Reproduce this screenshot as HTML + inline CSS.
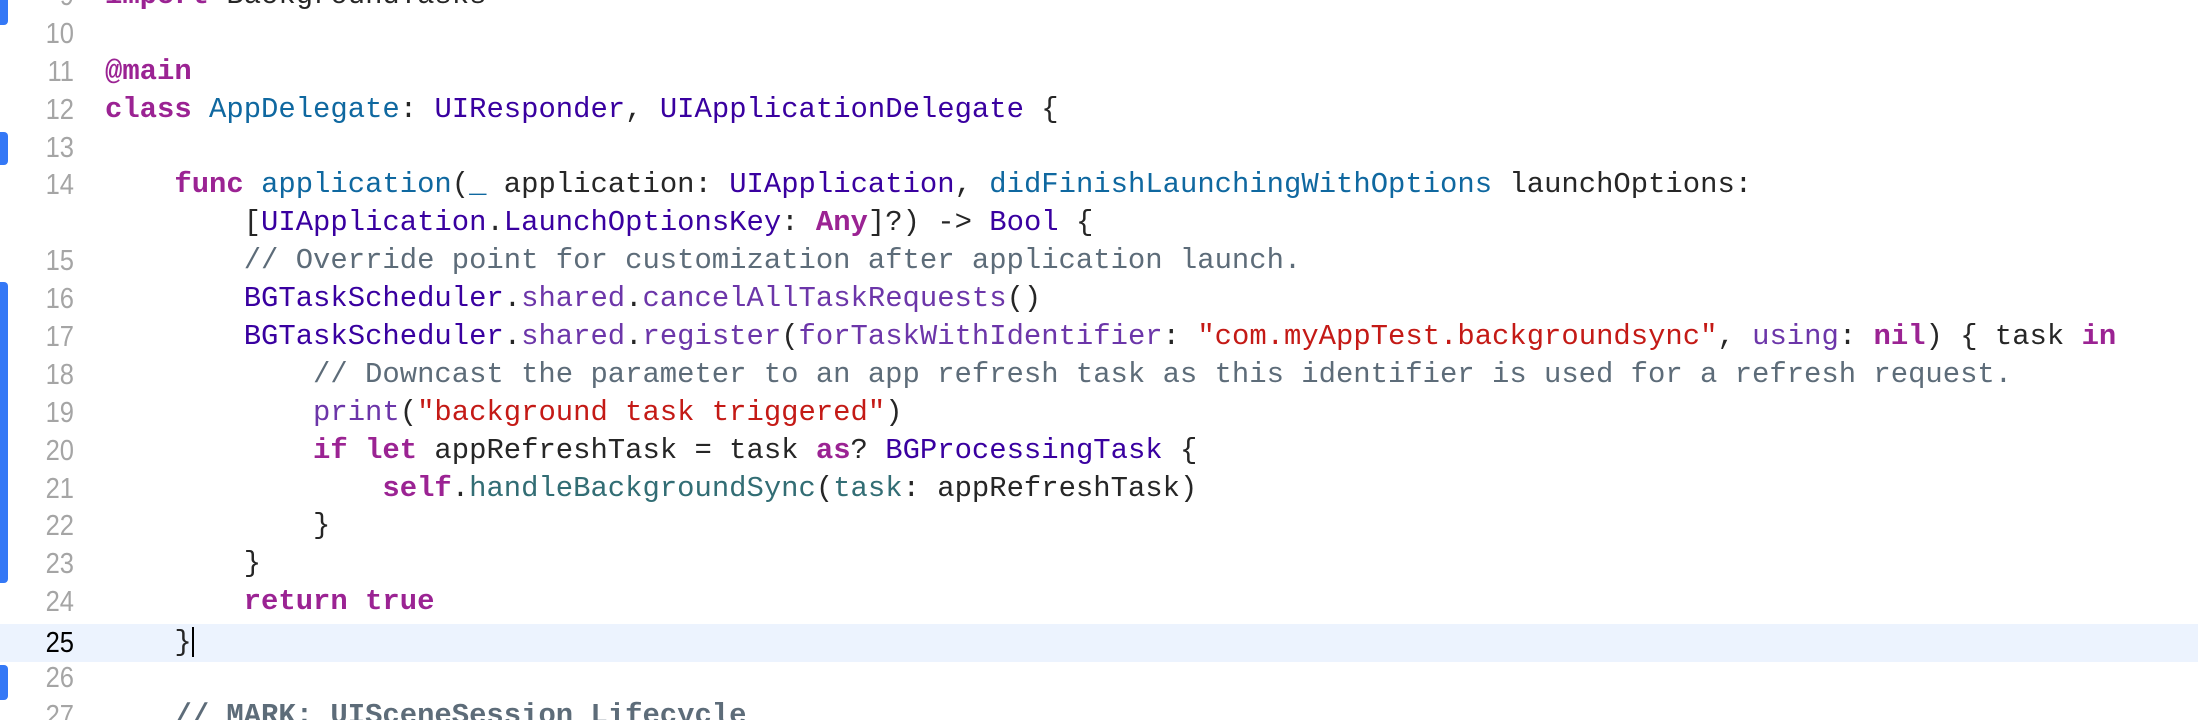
<!DOCTYPE html>
<html><head><meta charset="utf-8"><style>
html,body{margin:0;padding:0;background:#fff;width:2198px;height:720px;overflow:hidden;position:relative}
.l{position:absolute;left:0;height:38px;line-height:38px;font-family:"Liberation Mono",monospace;font-size:28.9px;white-space:pre;color:#262626;width:2198px}
.n{position:absolute;right:2124px;color:#a5a5a5;font-family:"Liberation Sans",sans-serif;font-size:29px;text-align:right;width:70px;transform:scaleX(0.88);transform-origin:right}
.c{position:absolute;left:105px}
.k{color:#9b2393;font-weight:bold}.t{color:#3900a0}.d{color:#0f68a0}.m{color:#6c36a9}.p{color:#326d74}.s{color:#c41a16}.cm{color:#5d6c79}
.bar{position:absolute;left:0;width:8px;background:#3478f6;border-radius:0 4px 4px 0}
</style></head><body>
<div style="position:absolute;left:0;top:624px;width:2198px;height:38px;background:#ecf3fe"></div>
<div class="bar" style="top:-5px;height:30px"></div>
<div class="bar" style="top:132px;height:33px"></div>
<div class="bar" style="top:282px;height:301px"></div>
<div class="bar" style="top:665px;height:35px"></div>

<div class="l" style="top:-23px"><span class="n">9</span><span class="c"><span class="k">import</span> BackgroundTasks</span></div>
<div class="l" style="top:15px"><span class="n">10</span></div>
<div class="l" style="top:53px"><span class="n">11</span><span class="c"><span class="k">@main</span></span></div>
<div class="l" style="top:91px"><span class="n">12</span><span class="c"><span class="k">class</span> <span class="d">AppDelegate</span>: <span class="t">UIResponder</span>, <span class="t">UIApplicationDelegate</span> {</span></div>
<div class="l" style="top:129px"><span class="n">13</span></div>
<div class="l" style="top:166px"><span class="n">14</span><span class="c">    <span class="k">func</span> <span class="d">application</span>(<span class="d">_</span> application: <span class="t">UIApplication</span>, <span class="d">didFinishLaunchingWithOptions</span> launchOptions:</span></div>
<div class="l" style="top:204px"><span class="c">        [<span class="t">UIApplication</span>.<span class="t">LaunchOptionsKey</span>: <span class="k">Any</span>]?) -> <span class="t">Bool</span> {</span></div>
<div class="l" style="top:242px"><span class="n">15</span><span class="c">        <span class="cm">// Override point for customization after application launch.</span></span></div>
<div class="l" style="top:280px"><span class="n">16</span><span class="c">        <span class="t">BGTaskScheduler</span>.<span class="m">shared</span>.<span class="m">cancelAllTaskRequests</span>()</span></div>
<div class="l" style="top:318px"><span class="n">17</span><span class="c">        <span class="t">BGTaskScheduler</span>.<span class="m">shared</span>.<span class="m">register</span>(<span class="m">forTaskWithIdentifier</span>: <span class="s">"com.myAppTest.backgroundsync"</span>, <span class="m">using</span>: <span class="k">nil</span>) { task <span class="k">in</span></span></div>
<div class="l" style="top:356px"><span class="n">18</span><span class="c">            <span class="cm">// Downcast the parameter to an app refresh task as this identifier is used for a refresh request.</span></span></div>
<div class="l" style="top:394px"><span class="n">19</span><span class="c">            <span class="m">print</span>(<span class="s">"background task triggered"</span>)</span></div>
<div class="l" style="top:432px"><span class="n">20</span><span class="c">            <span class="k">if</span> <span class="k">let</span> appRefreshTask = task <span class="k">as</span>? <span class="t">BGProcessingTask</span> {</span></div>
<div class="l" style="top:470px"><span class="n">21</span><span class="c">                <span class="k">self</span>.<span class="p">handleBackgroundSync</span>(<span class="p">task</span>: appRefreshTask)</span></div>
<div class="l" style="top:507px"><span class="n">22</span><span class="c">            }</span></div>
<div class="l" style="top:545px"><span class="n">23</span><span class="c">        }</span></div>
<div class="l" style="top:583px"><span class="n">24</span><span class="c">        <span class="k">return</span> <span class="k">true</span></span></div>
<div class="l" style="top:624px"><span class="n" style="color:#000">25</span><span class="c">    }<span style="display:inline-block;width:2px;height:30px;background:#000;vertical-align:middle"></span></span></div>
<div class="l" style="top:659px"><span class="n">26</span></div>
<div class="l" style="top:697px"><span class="n">27</span><span class="c">    <span class="cm" style="font-weight:bold">// MARK: UISceneSession Lifecycle</span></span></div>
</body></html>
